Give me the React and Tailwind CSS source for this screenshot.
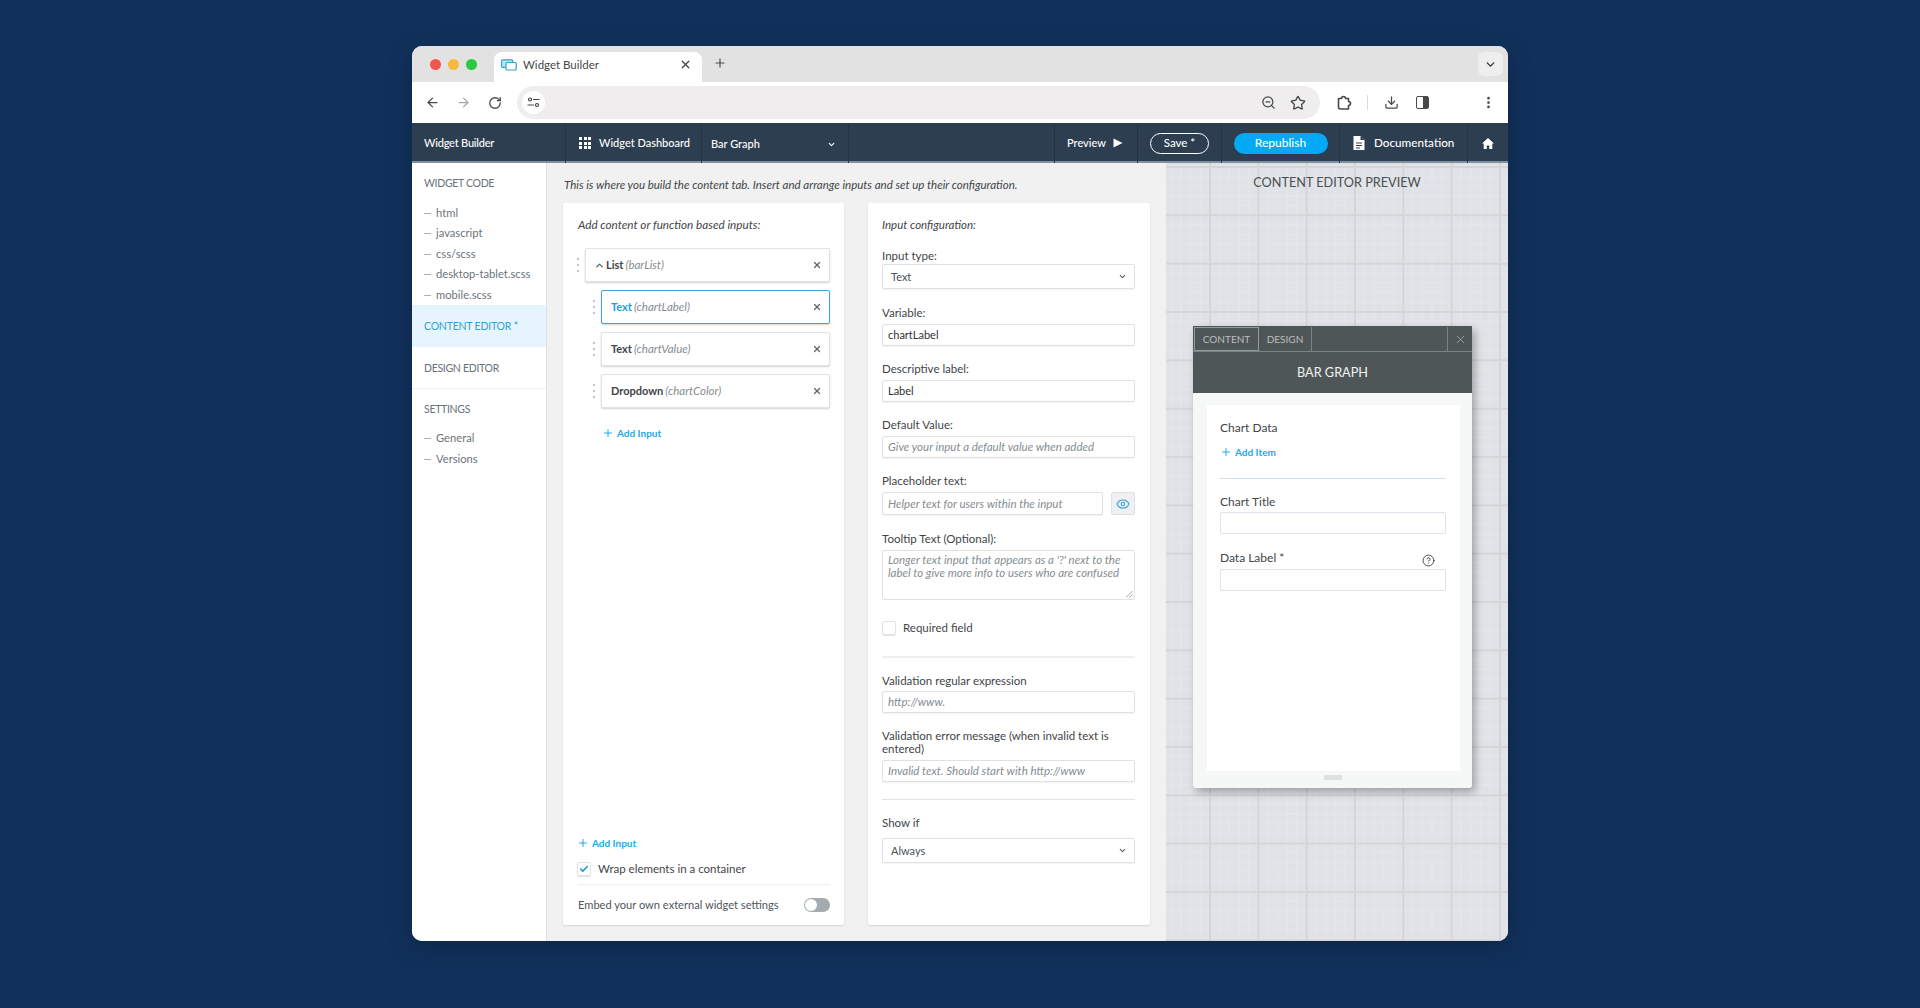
import { ArrowLeft, ArrowRight, RotateCw, ZoomOut, Star, Download, EllipsisVertical, X, Plus, ChevronDown, ChevronUp, Eye, Check, CircleHelp } from 'lucide-react';

const Grip = ({ className = "" }) => (
  <svg width="4" height="16" viewBox="0 0 4 16" className={className}>
    <circle cx="2" cy="2" r="1.2" fill="#c4c8cb" />
    <circle cx="2" cy="8" r="1.2" fill="#c4c8cb" />
    <circle cx="2" cy="14" r="1.2" fill="#c4c8cb" />
  </svg>
);

const Divider = () => <div className="w-px self-stretch bg-[#233445]" />;

const SideHead = ({ children, className = "" }) => (
  <div className={`pl-3 text-[10.5px] leading-4 tracking-[-0.3px] text-[#68727a] ${className}`}>{children}</div>
);

const SideItem = ({ children }) => (
  <div className="flex h-[20.5px] items-center pl-3 text-[11.2px] text-[#6b747b]">
    <span className="mr-[5px] inline-block h-px w-[7px] bg-[#a9afb3]" />
    {children}
  </div>
);

const InputRow = ({ name, variable, active, className = "" }) => (
  <div className={`flex h-[34px] items-center rounded-[2px] border bg-white pl-[9px] pr-[7px] text-[11px] shadow-[0_1px_2px_rgba(0,0,0,0.18)] ${active ? "border-[#3fa4d6]" : "border-[#dfe3e6]"} ${className}`}>
    <span className={`font-bold ${active ? "text-[#27a0d8]" : "text-[#3f4549]"}`}>{name}</span>
    <span className="ml-[2px] text-[11.5px] italic text-[#868d92]">{variable}</span>
    <X size={10} strokeWidth={3} className="ml-auto text-[#5d6469]" />
  </div>
);

const AddLink = ({ children, className = "" }) => (
  <div className={`flex h-4 items-center text-[10px] font-bold text-[#1ea7ee] ${className}`}>
    <Plus size={12} strokeWidth={2} className="mr-[3px]" />
    {children}
  </div>
);

const Label = ({ children, className = "" }) => (
  <div className={`text-[11.5px] leading-4 text-[#3f4549] ${className}`}>{children}</div>
);

const Box = ({ value, placeholder, className = "h-[22px]" }) => (
  <div className={`flex items-center rounded-[2px] border border-[#dde2e6] bg-white pl-[5px] text-[11.5px] shadow-[0_1px_1px_rgba(0,0,0,0.05)] ${className}`}>
    {value ? <span className="text-[11px] text-[#2e3337]">{value}</span> : <span className="italic text-[#868d92]">{placeholder}</span>}
  </div>
);

const SelectBox = ({ value }) => (
  <div className="flex h-[25px] items-center justify-between rounded-[2px] border border-[#dde2e6] bg-white pl-[8px] pr-[7px] text-[11px] text-[#4b5156] shadow-[0_1px_1px_rgba(0,0,0,0.05)]">
    <span className="mt-[1px]">{value}</span>
    <ChevronDown size={9} strokeWidth={3} className="text-[#5d6469]" />
  </div>
);

const PreviewInput = () => <div className="h-[22px] rounded-[2px] border border-[#dde3ea] bg-white" />;

export default function App() {
  return (
    <div className="h-[1008px] w-full overflow-hidden bg-[#11315c] pt-[46px] font-['Lato',sans-serif]">
      <div className="mx-auto flex h-[895px] w-[1096px] flex-col overflow-hidden rounded-[10px] bg-white shadow-[0_6px_24px_rgba(0,0,0,0.25)]">

        {/* browser tabs */}
        <div className="flex h-[36px] shrink-0 items-end bg-[#e2e2e2]">
          <div className="flex h-full items-center gap-[7px] self-center pl-[18px]">
            <span className="h-[11px] w-[11px] rounded-full bg-[#f0584f]" />
            <span className="h-[11px] w-[11px] rounded-full bg-[#f6b93b]" />
            <span className="h-[11px] w-[11px] rounded-full bg-[#29c940]" />
          </div>
          <div className="ml-[17px] flex h-[30px] w-[208px] items-center rounded-t-[8px] bg-white pb-[5px] pl-[7px] pr-[10px]">
            <svg width="16" height="12" viewBox="0 0 16 12" fill="none" stroke="#2ea6cf" strokeWidth="1.2">
              <rect x="0.6" y="0.8" width="11" height="7.5" rx="1" fill="#bfe6f2" />
              <rect x="5" y="3.5" width="10.2" height="7.5" rx="1" fill="#fff" />
            </svg>
            <span className="ml-[6px] text-[11.5px] text-[#44474a]">Widget Builder</span>
            <X size={13} strokeWidth={2.4} className="ml-auto text-[#3b3e41]" />
          </div>
          <Plus size={14} strokeWidth={2} className="mb-[12px] ml-[11px] text-[#494c4f]" />
          <div className="mb-[6px] ml-auto mr-[5px] flex h-[24px] w-[25px] items-center justify-center rounded-[6px] bg-[#eeeeee]">
            <ChevronDown size={13} strokeWidth={2.6} className="text-[#333]" />
          </div>
        </div>

        {/* browser toolbar */}
        <div className="flex h-[41px] shrink-0 items-center bg-white text-[#46494c]">
          <ArrowLeft size={15} strokeWidth={2} className="ml-[13px]" />
          <ArrowRight size={15} strokeWidth={2} className="ml-[16px] text-[#a6a8aa]" />
          <RotateCw size={14} strokeWidth={2.2} className="ml-[17px]" />
          <div className="ml-[15px] flex h-[33px] w-[803px] items-center rounded-full bg-[#efedee] pl-[5px] pr-[14px]">
            <div className="flex h-[23px] w-[23px] items-center justify-center rounded-full bg-white">
              <svg width="13" height="11" viewBox="0 0 13 11" fill="none" stroke="#44474a" strokeWidth="1.2">
                <circle cx="3" cy="2.5" r="1.5" />
                <path d="M6 2.5h6.5M0.5 8h6.5" />
                <circle cx="10" cy="8" r="1.5" />
              </svg>
            </div>
            <ZoomOut size={15} strokeWidth={2} className="ml-auto" />
            <Star size={16} strokeWidth={2} className="ml-[14px]" />
          </div>
          <svg width="16" height="16" viewBox="0 0 16 16" fill="none" stroke="#46494c" strokeWidth="1.6" strokeLinejoin="round" className="ml-[16px]">
            <path d="M2.5 3.5H5.5a2 2 0 0 1 4 0H12.5V6.5a2 2 0 0 1 0 4V14H4.5a2 2 0 0 1-2-2Z" />
          </svg>
          <div className="ml-[15px] h-[15px] w-px bg-[#dcdcdc]" />
          <Download size={15} strokeWidth={2} className="ml-[16px]" />
          <div className="ml-[17px] flex h-[13px] w-[13px] rounded-[2px] border-[1.5px] border-[#46494c]">
            <span className="ml-auto h-full w-[5px] bg-[#46494c]" />
          </div>
          <EllipsisVertical size={15} strokeWidth={2.4} className="ml-[52px]" />
        </div>

        {/* app bar */}
        <div className="flex h-[40px] shrink-0 items-stretch bg-[#2c3e50] text-[11px] font-medium text-white shadow-[inset_0_-2px_0_#7f8f9e]">
          <div className="flex w-[153px] items-center pl-3 tracking-[-0.2px]">Widget Builder</div>
          <Divider />
          <div className="flex w-[135px] items-center pl-[13px]">
            <div className="grid grid-cols-3 gap-[1.5px]">
              {Array.from({ length: 9 }).map((_, i) => (
                <span key={i} className="h-[3px] w-[3px] bg-white" />
              ))}
            </div>
            <span className="ml-2">Widget Dashboard</span>
          </div>
          <Divider />
          <div className="flex w-[146px] items-center justify-between pl-[9px] pr-[12px]">
            <span className="mt-[2px]">Bar Graph</span>
            <ChevronDown size={9} strokeWidth={3} className="mt-[2px]" />
          </div>
          <Divider />
          <div className="flex-1" />
          <Divider />
          <div className="flex w-[82px] items-center pl-[12px]">
            Preview
            <svg width="10" height="10" viewBox="0 0 10 10" className="ml-[7px]"><path d="M0.5 0.5L9.5 5L0.5 9.5Z" fill="#fff" /></svg>
          </div>
          <Divider />
          <div className="flex w-[83px] items-center justify-center">
            <span className="flex h-[21px] w-[59px] items-center justify-center rounded-full border border-white text-[11.5px]">Save *</span>
          </div>
          <Divider />
          <div className="flex w-[117px] items-center justify-center">
            <span className="flex h-[21px] w-[94px] items-center justify-center rounded-full bg-[#03a9f4] text-[12px]">Republish</span>
          </div>
          <Divider />
          <div className="flex w-[127px] items-center pl-[13px] text-[11.7px]">
            <svg width="12" height="14" viewBox="0 0 12 14" className="mr-[9px]">
              <path d="M0.5 0H7.5L11.5 4V14H0.5Z" fill="#fff" />
              <path d="M7.5 0V4H11.5" fill="#2c3e50" />
              <path d="M3 7H9M3 9.5H9M3 12H7" stroke="#2c3e50" strokeWidth="1" />
            </svg>
            Documentation
          </div>
          <Divider />
          <div className="flex w-[40px] items-center justify-center">
            <svg width="12" height="11" viewBox="0 0 12 11"><path d="M6 0L12 5.5H10.3V11H7.2V7.4H4.8V11H1.7V5.5H0Z" fill="#fff" /></svg>
          </div>
        </div>

        <div className="flex min-h-0 flex-1">

          {/* sidebar */}
          <aside className="w-[135px] shrink-0 border-r border-[#dfe1e3] bg-white pt-3">
            <SideHead>WIDGET CODE</SideHead>
            <div className="mt-[12px]">
              <SideItem>html</SideItem>
              <SideItem>javascript</SideItem>
              <SideItem>css/scss</SideItem>
              <SideItem>desktop-tablet.scss</SideItem>
              <SideItem>mobile.scss</SideItem>
            </div>
            <div className="mt-[-1px] flex h-[42px] items-center bg-[#e6f5fd] pl-3 pt-[2px] text-[10.5px] tracking-[-0.2px] text-[#2ba3dc]">CONTENT EDITOR *</div>
            <SideHead className="mt-[13px]">DESIGN EDITOR</SideHead>
            <div className="mt-[12px] h-px bg-[#f0f1f2]" />
            <SideHead className="mt-[12px]">SETTINGS</SideHead>
            <div className="mt-[12px]">
              <SideItem>General</SideItem>
              <SideItem>Versions</SideItem>
            </div>
          </aside>

          {/* main */}
          <main className="flex w-[619px] shrink-0 flex-col bg-[#f1f1f1] px-4 pb-4">
            <div className="mt-[14px] h-4 pl-[1px] text-[11.5px] italic leading-4 text-[#3f4549]">
              This is where you build the content tab. Insert and arrange inputs and set up their configuration.
            </div>
            <div className="mt-[10px] flex flex-1 gap-6">

              {/* left card */}
              <section className="flex w-[281px] flex-col rounded-[2px] bg-white pl-[15px] pr-[14px] pt-[14px] shadow-[0_1px_2px_rgba(0,0,0,0.12)]">
                <div className="h-4 text-[11.7px] italic leading-[15px] text-[#3f4549]">Add content or function based inputs:</div>
                <div className="mt-[15px] flex items-center">
                  <Grip className="-ml-[2px]" />
                  <InputRow
                    className="ml-[5px] flex-1"
                    name={<span className="flex items-center font-bold"><ChevronUp size={11} strokeWidth={3} className="mr-[1px] -ml-[1px] text-[#5d6469]" />List</span>}
                    variable="(barList)"
                  />
                </div>
                {[
                  ["Text", "(chartLabel)", true],
                  ["Text", "(chartValue)", false],
                  ["Dropdown", "(chartColor)", false],
                ].map(([name, variable, active]) => (
                  <div key={variable} className="mt-2 flex items-center pl-[14px]">
                    <Grip />
                    <InputRow className="ml-[5px] flex-1" name={name} variable={variable} active={active} />
                  </div>
                ))}
                <AddLink className="ml-[24px] mt-[17px]">Add Input</AddLink>

                <AddLink className="-ml-px mt-auto">Add Input</AddLink>
                <div className="-ml-px mt-[11px] flex h-[14px] items-center text-[11.5px] text-[#3f4549]">
                  <div className="flex h-[14px] w-[14px] items-center justify-center rounded-[2px] border border-[#dfe3e6] shadow-[0_1px_1px_rgba(0,0,0,0.12)]">
                    <Check size={10} strokeWidth={4} className="text-[#1f9ad6]" />
                  </div>
                  <span className="ml-[7px]">Wrap elements in a container</span>
                </div>
                <div className="mt-[8px] h-px bg-[#eeeff0]" />
                <div className="mb-[13px] mt-[13px] flex h-[14px] items-center justify-between text-[11.1px] text-[#50565b]">
                  Embed your own external widget settings
                  <div className="flex h-[14px] w-[26px] items-center rounded-full bg-[#a3abb0] pl-[1px]">
                    <span className="h-[12px] w-[12px] rounded-full bg-white" />
                  </div>
                </div>
              </section>

              {/* right card */}
              <section className="flex w-[282px] flex-col rounded-[2px] bg-white pl-[14px] pr-[15px] pt-[14px] shadow-[0_1px_2px_rgba(0,0,0,0.12)]">
                <div className="h-4 text-[11.5px] italic leading-4 text-[#3f4549]">Input configuration:</div>

                <Label className="mt-[15px]">Input type:</Label>
                <SelectBox value="Text" />

                <Label className="mt-4">Variable:</Label>
                <div className="mt-[3px]"><Box value="chartLabel" /></div>

                <Label className="mt-[15px]">Descriptive label:</Label>
                <div className="mt-[3px]"><Box value="Label" /></div>

                <Label className="mt-[15px]">Default Value:</Label>
                <div className="mt-[3px]"><Box placeholder="Give your input a default value when added" /></div>

                <Label className="mt-[15px]">Placeholder text:</Label>
                <div className="mt-[3px] flex gap-2">
                  <div className="flex-1"><Box placeholder="Helper text for users within the input" className="h-[23px]" /></div>
                  <div className="flex h-[23px] w-6 items-center justify-center rounded-[2px] border border-[#dde2e6] bg-[#eef0f1]">
                    <Eye size={14} strokeWidth={1.8} className="text-[#2d9fd8]" />
                  </div>
                </div>

                <Label className="mt-4">Tooltip Text (Optional):</Label>
                <div className="relative mt-[3px] h-[50px] rounded-[2px] border border-[#dde2e6] bg-white px-[5px] pt-[3px] text-[11.5px] italic leading-[12.5px] text-[#868d92]">
                  Longer text input that appears as a '?' next to the label to give more info to users who are confused
                  <svg width="8" height="8" viewBox="0 0 8 8" className="absolute bottom-[1px] right-[1px]" stroke="#8b9094" strokeWidth="0.8">
                    <path d="M1 7.5L7.5 1M4.5 7.5L7.5 4.5" />
                  </svg>
                </div>

                <div className="mt-[21px] flex h-[14px] items-center text-[11.5px] text-[#3f4549]">
                  <span className="h-[14px] w-[14px] rounded-[2px] border border-[#dfe3e6] shadow-[0_1px_1px_rgba(0,0,0,0.12)]" />
                  <span className="ml-[7px]">Required field</span>
                </div>
                <div className="mt-[21px] h-[2px] bg-[#eceff1]" />

                <Label className="mt-[15px]">Validation regular expression</Label>
                <div className="mt-[2px]"><Box placeholder="http://www." /></div>

                <Label className="mt-4 !leading-[13px]">Validation error message (when invalid text is entered)</Label>
                <div className="mt-[5px]"><Box placeholder="Invalid text. Should start with http://www" /></div>

                <div className="mt-[17px] h-px bg-[#dfe3e6]" />
                <Label className="mt-[15px]">Show if</Label>
                <div className="mt-[7px]"><SelectBox value="Always" /></div>
              </section>
            </div>
          </main>

          {/* preview canvas */}
          <div className="flex-1 bg-[#dfe2e6] bg-[linear-gradient(#d5d5d7_2px,transparent_2px),linear-gradient(90deg,#d5d5d7_2px,transparent_2px),linear-gradient(#e3e5e8_2px,transparent_2px),linear-gradient(90deg,#e3e5e8_2px,transparent_2px)] bg-[size:48.33px_48.33px,48.33px_48.33px,9.67px_9.67px,9.67px_9.67px] bg-[position:43px_3px,43px_3px,43px_3px,43px_3px] pl-[27px] pt-[11px]">
            <div className="ml-[-27px] h-4 text-center text-[12.7px] leading-4 text-[#4b4f52]">CONTENT EDITOR PREVIEW</div>

            {/* widget dialog */}
            <div className="mt-[136px] flex h-[462px] w-[279px] flex-col overflow-hidden rounded-b-[3px] bg-[#f6f8f7] shadow-[3px_4px_8px_rgba(0,0,0,0.3)]">
              <div className="flex h-[26px] shrink-0 border-b border-[#7a8283] bg-[#4f5657] pl-[1px] pt-[1px] text-[10px] text-[#b9bfc0]">
                <div className="flex w-[65px] items-center justify-center border border-[#939a9b]">CONTENT</div>
                <div className="flex w-[53px] items-center justify-center border-r border-[#7a8283]">DESIGN</div>
                <div className="ml-auto flex w-[25px] items-center justify-center border-l border-[#7a8283]">
                  <X size={13} strokeWidth={1.5} className="text-[#a4aaab]" />
                </div>
              </div>
              <div className="flex h-[41px] shrink-0 items-center justify-center bg-[#4f5657] text-[12.7px] text-[#f1f3f3]">BAR GRAPH</div>
              <div className="ml-[14px] mr-[12px] mt-[12px] h-[366px] bg-white pl-[13px] pr-[14px] pt-[15px]">
                <Label className="text-[12px]">Chart Data</Label>
                <AddLink className="mt-[8px]">Add Item</AddLink>
                <div className="mt-[18px] h-px bg-[#d3dde6]" />
                <Label className="mt-[15px] text-[12px]">Chart Title</Label>
                <div className="mt-[2px]"><PreviewInput /></div>
                <div className="mt-[14px] flex items-center justify-between pr-[11px]">
                  <Label className="text-[12px]">Data Label *</Label>
                  <CircleHelp size={13} strokeWidth={1.6} className="mt-[6px] text-[#333]" />
                </div>
                <div className="mt-[2px]"><PreviewInput /></div>
              </div>
              <div className="mx-auto mt-[4px] h-[5px] w-[18px] bg-[#dfe1e1]" />
            </div>
          </div>
        </div>
      </div>
    </div>
  );
}
